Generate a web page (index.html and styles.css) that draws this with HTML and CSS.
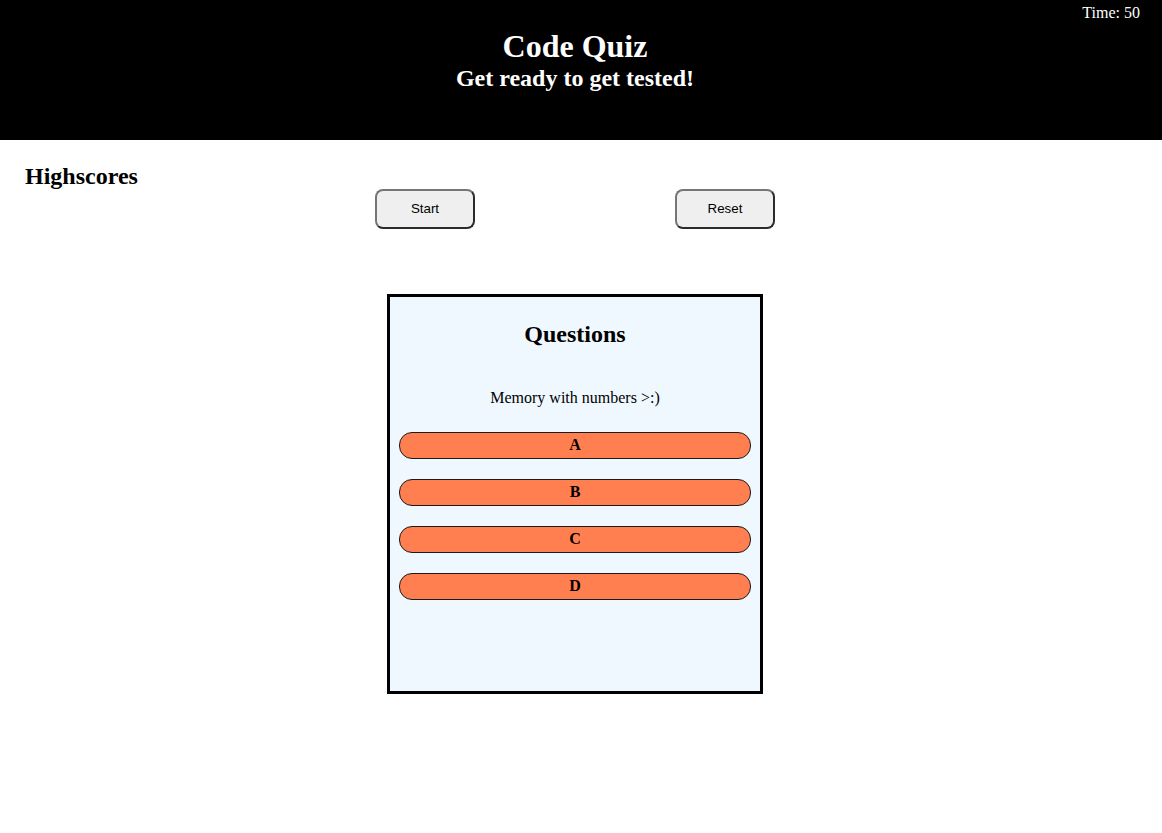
FILE: index.html
```html
<!DOCTYPE html>
<html lang="en">
<head>
<meta charset="utf-8">
<title>Code Quiz</title>
<link rel="stylesheet" href="styles.css">
</head>
<body>
<header class="site-header">
  <div class="timer">Time: 50</div>
  <h1 class="title">Code Quiz</h1>
  <h2 class="subtitle">Get ready to get tested!</h2>
</header>
<main class="page">
  <h2 class="highscores">Highscores</h2>
  <div class="controls">
    <button class="ctrl-btn">Start</button>
    <button class="ctrl-btn">Reset</button>
  </div>
  <section class="quiz-box">
    <h2 class="quiz-title">Questions</h2>
    <p class="question">Memory with numbers &gt;:)</p>
    <div class="options">
      <button class="option">A</button>
      <button class="option">B</button>
      <button class="option">C</button>
      <button class="option">D</button>
    </div>
  </section>
</main>
</body>
</html>
```
FILE: styles.css
```css
html, body {
  margin: 0;
  padding: 0;
  background: #ffffff;
  font-family: "Liberation Serif", "Times New Roman", serif;
  color: #000;
}

.site-header {
  background: #000;
  color: #fff;
  height: 140px;
  padding-right: 12px;
  box-sizing: border-box;
  text-align: center;
}

.timer {
  text-align: right;
  font-size: 16px;
  line-height: 18px;
  padding: 4px 10px 0 0;
}

.title {
  font-size: 32px;
  line-height: 34px;
  margin: 7px 0 0;
  font-weight: bold;
}

.subtitle {
  font-size: 24px;
  line-height: 27px;
  margin: 2px 0 0;
  font-weight: bold;
}

.page {
  width: 1150px;
}

.highscores {
  font-size: 24px;
  margin: 23px 0 0 25px;
  line-height: 27px;
}

.controls {
  display: flex;
  justify-content: center;
  gap: 200px;
  margin-top: -1px;
}

.ctrl-btn {
  width: 100px;
  height: 40px;
  box-sizing: border-box;
  background: #efefef;
  border: 2px solid;
  border-color: #767676 #2b2b2b #2b2b2b #767676;
  border-radius: 8px;
  font-family: "Liberation Sans", Arial, sans-serif;
  font-size: 13.33px;
  color: #000;
  padding: 0 0 2px;
}

.quiz-box {
  width: 376px;
  height: 400px;
  box-sizing: border-box;
  margin: 65px auto 0;
  border: 3px solid #000;
  background: #f0f8ff;
  text-align: center;
}

.quiz-title {
  font-size: 24px;
  line-height: 27px;
  margin: 24px 0 0;
}

.question {
  font-size: 16px;
  line-height: 18px;
  margin: 41px 0 0;
}

.options {
  display: flex;
  flex-direction: column;
  align-items: center;
  gap: 20px;
  margin-top: 25px;
}

.option {
  width: 352px;
  height: 27px;
  box-sizing: border-box;
  background: #ff7f50;
  border: 1px solid #1a1a1a;
  border-radius: 13px;
  font-family: "Liberation Serif", "Times New Roman", serif;
  font-weight: bold;
  font-size: 16px;
  color: #000;
  padding: 0 0 2px;
}
```
